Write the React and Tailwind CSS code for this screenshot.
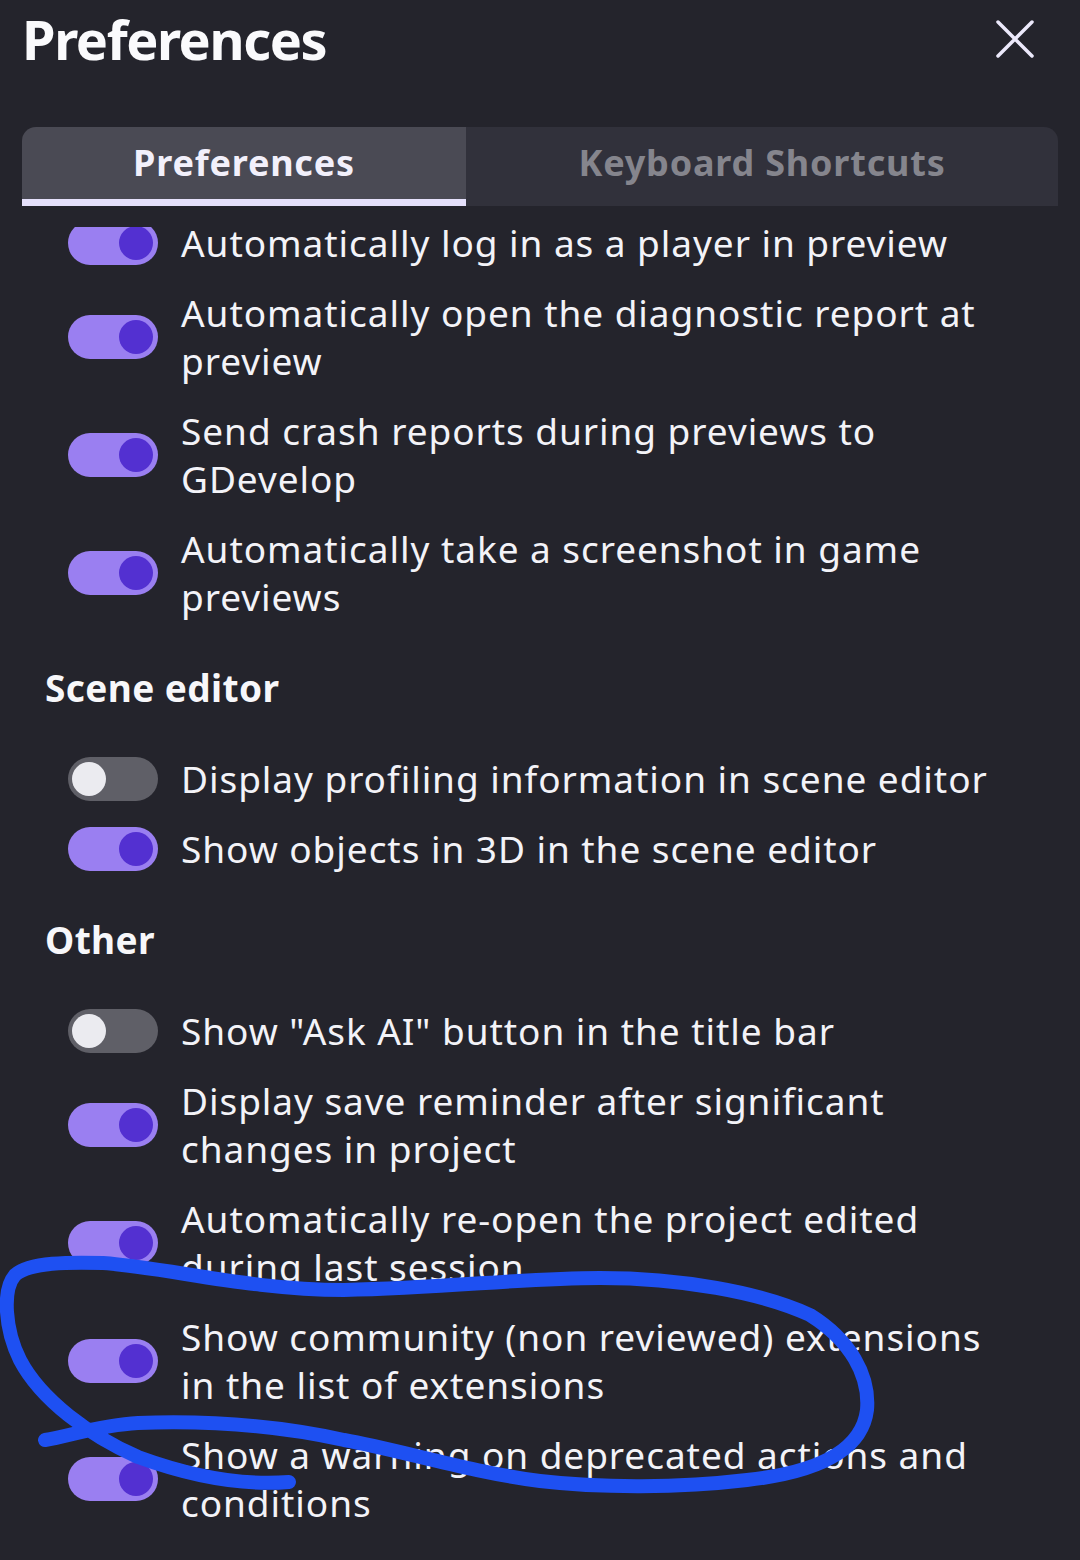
import React from 'react';

const sections = [
  {
    title: null,
    items: [
      { label: 'Automatically log in as a player in preview', on: true },
      { label: 'Automatically open the diagnostic report at preview', on: true },
      { label: 'Send crash reports during previews to GDevelop', on: true },
      { label: 'Automatically take a screenshot in game previews', on: true },
    ],
  },
  {
    title: 'Scene editor',
    items: [
      { label: 'Display profiling information in scene editor', on: false },
      { label: 'Show objects in 3D in the scene editor', on: true },
    ],
  },
  {
    title: 'Other',
    items: [
      { label: 'Show "Ask AI" button in the title bar', on: false },
      { label: 'Display save reminder after significant changes in project', on: true },
      { label: 'Automatically re-open the project edited during last session', on: true },
      { label: 'Show community (non reviewed) extensions in the list of extensions', on: true },
      { label: 'Show a warning on deprecated actions and conditions', on: true },
    ],
  },
];

function Toggle({ on }) {
  return (
    <span
      className={`flex h-[44px] w-[90px] shrink-0 items-center rounded-full ${
        on ? 'bg-[#9a7ff1]' : 'bg-[#5f5f67]'
      }`}
    >
      <span
        className={`h-[34px] w-[34px] rounded-full ${
          on ? 'ml-auto mr-[5px] bg-[#5330d1]' : 'ml-[4px] bg-[#ebebf0]'
        }`}
      />
    </span>
  );
}

function Row({ label, on }) {
  return (
    <div className="flex items-center gap-[23px] pl-[68px] pr-[76px]">
      <Toggle on={on} />
      <span className="text-[37px] leading-[48px] tracking-[0.95px] text-[#f3f3f8]">{label}</span>
    </div>
  );
}

export default function App() {
  return (
    <div className="relative flex h-[1560px] w-[1080px] flex-col overflow-hidden bg-[#24242c] font-['Noto_Sans',sans-serif] text-white">
      <header className="flex items-start justify-between pl-[22px] pr-[46px] pt-[7px]">
        <h1 className="text-[54px] font-bold leading-[64px] tracking-[-1.4px] text-[#fafafc]">Preferences</h1>
        <button className="mt-[13px]" aria-label="Close">
          <svg width="38" height="38" viewBox="0 0 38 38" fill="none" stroke="#ece9fb" strokeWidth="3.5" strokeLinecap="round">
            <path d="M2 2L36 36M36 2L2 36" />
          </svg>
        </button>
      </header>

      <div className="mx-[22px] mt-[56px] flex">
        <div className="flex h-[79px] w-[444px] items-center justify-center rounded-tl-[14px] border-b-[7px] border-[#e5e0fb] bg-[#4a4a54] text-[36px] font-bold tracking-[0.8px] text-[#f2f0fb]">
          Preferences
        </div>
        <div className="flex h-[79px] flex-1 items-center justify-center rounded-tr-[14px] bg-[#31313b] pb-[7px] text-[36px] font-bold tracking-[0.8px] text-[#85858d]">
          Keyboard Shortcuts
        </div>
      </div>

      <div className="mt-[21px] flex-1 overflow-hidden">
        <div className="-mt-[8px] flex flex-col">
          {sections.map((section, i) => (
            <div key={i} className="flex flex-col">
              {section.title && (
                <h2 className="my-[43px] pl-[45px] text-[37px] font-bold leading-[48px] tracking-[0.4px] text-[#f7f7fa]">
                  {section.title}
                </h2>
              )}
              <div className="flex flex-col gap-[22px]">
                {section.items.map((item) => (
                  <Row key={item.label} {...item} />
                ))}
              </div>
            </div>
          ))}
        </div>
      </div>

      <svg className="pointer-events-none absolute left-0 top-0" width="1080" height="1560" viewBox="0 0 1080 1560" fill="none">
        <path
          d="M289 1482 C240 1486 190 1476 138 1457 C90 1436 41 1400 20 1360 C5 1330 2 1290 15 1275 C30 1262 70 1262 103 1263 C170 1268 250 1290 344 1290 C450 1288 520 1278 600 1278 C680 1278 760 1292 810 1315 C850 1340 870 1375 867 1410 C862 1450 820 1472 747 1480 C680 1488 600 1488 540 1481 C470 1472 400 1450 344 1440 C290 1428 220 1420 138 1423 C100 1425 70 1436 45 1440"
          stroke="#1e50f2"
          strokeWidth="14"
          strokeLinecap="round"
          strokeLinejoin="round"
        />
      </svg>
    </div>
  );
}
